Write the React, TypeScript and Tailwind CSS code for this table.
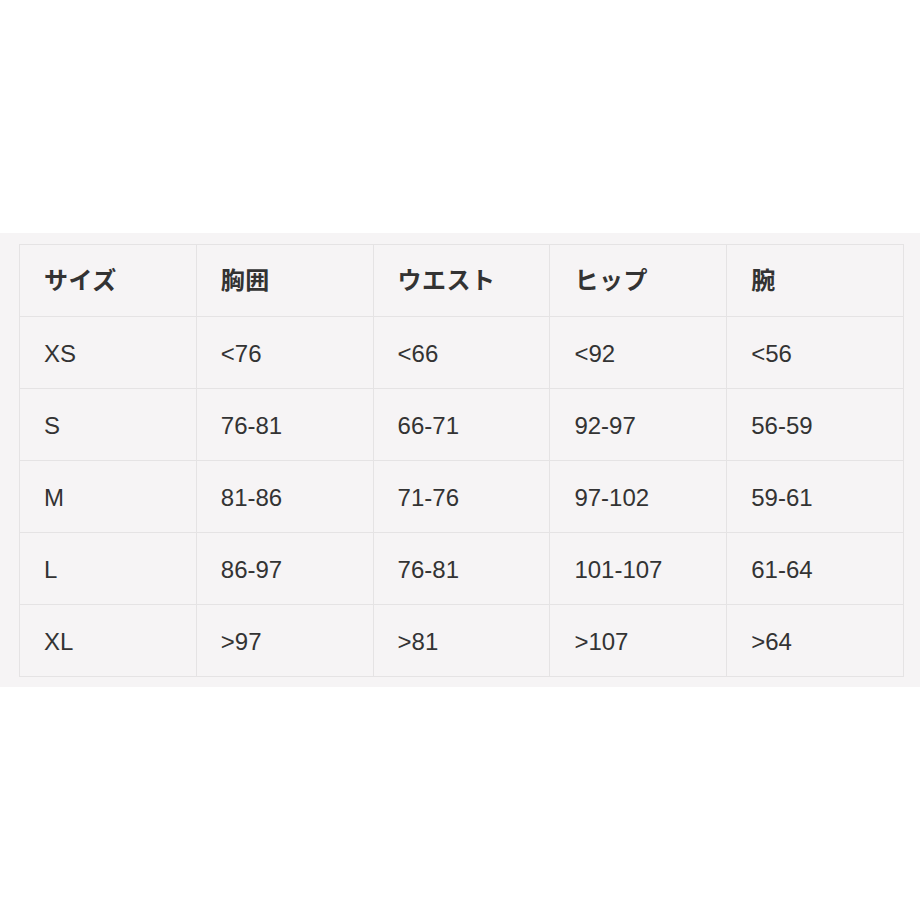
const headers = ['サイズ', '胸囲', 'ウエスト', 'ヒップ', '腕'];

const rows = [
  ['XS', '<76', '<66', '<92', '<56'],
  ['S', '76-81', '66-71', '92-97', '56-59'],
  ['M', '81-86', '71-76', '97-102', '59-61'],
  ['L', '86-97', '76-81', '101-107', '61-64'],
  ['XL', '>97', '>81', '>107', '>64'],
];

export default function App() {
  return (
    <div
      className="w-[920px] h-[920px] bg-white flex flex-col justify-center"
      style={{ fontFamily: '"Liberation Sans", "Noto Sans CJK JP", sans-serif' }}
    >
      {/* サイズ表 */}
      <div className="bg-[#f6f4f5] pl-[19px] pr-[16px] pt-[11px] pb-[10px]">
        <table className="w-full border-collapse table-fixed text-[#333333]">
          <thead>
            <tr className="h-[72px]">
              {headers.map((h) => (
                <th
                  key={h}
                  className="border border-[#e5e3e4] text-left font-bold pl-[24px] text-[24px] tracking-[0.5px]"
                >
                  {h}
                </th>
              ))}
            </tr>
          </thead>
          <tbody>
            {rows.map((r) => (
              <tr key={r[0]} className="h-[72px]">
                {r.map((c, i) => (
                  <td
                    key={i}
                    className="border border-[#e5e3e4] pl-[24px] pt-[2px] text-[24px]"
                  >
                    {c}
                  </td>
                ))}
              </tr>
            ))}
          </tbody>
        </table>
      </div>
    </div>
  );
}
